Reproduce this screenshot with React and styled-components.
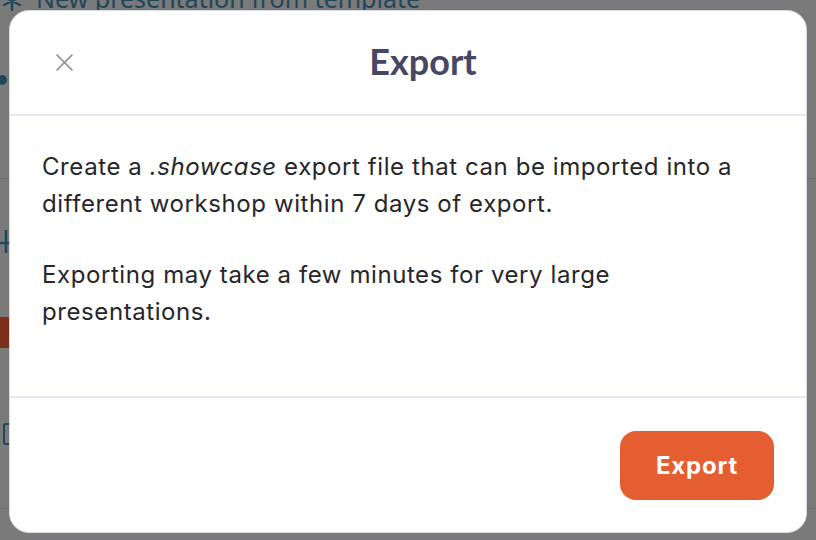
import styled, { createGlobalStyle } from 'styled-components';

const GlobalStyle = createGlobalStyle`
    html, body {
        margin: 0;
        padding: 0;
        width: 816px;
        height: 540px;
        overflow: hidden;
        background: #7a7a7a;
    }
`;

const App = () => {
    return (
        <>
            <GlobalStyle />
            <S.Page>
                <S.Backdrop>
                    <S.TopRow>
                        <svg width='20' height='20' viewBox='0 0 20 20' fill='none' stroke='currentColor' strokeWidth='2.4' strokeLinecap='round'>
                            <path d='M10 1v18M2 6l16 8M18 6L2 14' />
                        </svg>
                        <span>New presentation from template</span>
                    </S.TopRow>
                    <S.Dot />
                    <S.Rule $gap={93} />
                    <S.Plus width='24' height='24' viewBox='0 0 24 24' stroke='currentColor' strokeWidth='2.5'>
                        <path d='M12 0v23M0 13h24' />
                    </S.Plus>
                    <S.Block />
                    <S.Bracket />
                    <S.Rule $gap={63} />
                </S.Backdrop>

                <S.Modal>
                    <S.Header>
                        <S.Close aria-label='Close'>
                            <svg width='17' height='17' viewBox='0 0 17 17' stroke='currentColor' strokeWidth='1.6' strokeLinecap='round'>
                                <path d='M1 1l15 15M16 1L1 16' />
                            </svg>
                        </S.Close>
                        <S.Title>Export</S.Title>
                    </S.Header>
                    <S.Body>
                        <p>
                            Create a <em>.showcase</em> export file that can be imported into a different workshop within 7 days of export.
                        </p>
                        <p>Exporting may take a few minutes for very large presentations.</p>
                    </S.Body>
                    <S.Footer>
                        <S.Button>Export</S.Button>
                    </S.Footer>
                </S.Modal>
            </S.Page>
        </>
    );
};

const S = {};
S.Page = styled.div`
    position: relative;
    width: 816px;
    height: 540px;
    overflow: hidden;
`;

/* faded app content behind the dialog */
S.Backdrop = styled.div`
    display: flex;
    flex-direction: column;
    align-items: flex-start;
    color: #1f475a;
    font-family: 'Noto Sans', sans-serif;
`;

S.TopRow = styled.div`
    display: flex;
    align-items: center;
    gap: 14px;
    margin-top: -17px;
    padding-left: 2px;
    font-size: 25px;
    line-height: 30px;

    svg {
        margin-top: 6px;
    }
`;

S.Dot = styled.div`
    width: 10px;
    height: 10px;
    border-radius: 50%;
    background: #1f475a;
    margin: 62px 0 0 -3px;
`;

S.Rule = styled.div`
    width: 816px;
    height: 1px;
    background: #6e6e6e;
    margin-top: ${(p) => p.$gap}px;
`;

S.Plus = styled.svg`
    margin: 51px 0 0 -6px;
`;

S.Block = styled.div`
    width: 20px;
    height: 31px;
    background: #7a3019;
    margin-top: 63px;
`;

S.Bracket = styled.div`
    box-sizing: border-box;
    width: 14px;
    height: 22px;
    border: 2.5px solid #1f475a;
    border-radius: 3px;
    margin: 75px 0 0 3px;
`;

S.Modal = styled.div`
    position: absolute;
    left: 9px;
    top: 10px;
    width: 798px;
    height: 523px;
    box-sizing: border-box;
    background: #fff;
    border: 1px solid #d9d9e3;
    border-radius: 20px;
    display: flex;
    flex-direction: column;
    overflow: hidden;
    font-family: Inter, 'Noto Sans', sans-serif;
`;

S.Header = styled.div`
    position: relative;
    height: 103px;
    flex-shrink: 0;
    display: flex;
    align-items: center;
    justify-content: center;
    padding-left: 30px;
    border-bottom: 2px solid #e8e8f0;
`;

S.Close = styled.button`
    position: absolute;
    left: 46px;
    top: 43px;
    padding: 0;
    border: 0;
    background: none;
    color: #8a8a8a;
    display: flex;
`;

S.Title = styled.h2`
    margin: 0 0 3px;
    font-family: Lato, sans-serif;
    font-weight: 700;
    font-size: 36px;
    color: #474762;
`;

S.Body = styled.div`
    flex: 1;
    padding: 32px 32px 0 32px;
    border-bottom: 2px solid #e8e8f0;
    color: #26262b;
    font-size: 24px;
    letter-spacing: 0.58px;
    line-height: 37px;

    p {
        margin: 0 0 34px;
    }
`;

S.Footer = styled.div`
    height: 134px;
    flex-shrink: 0;
    display: flex;
    align-items: center;
    justify-content: flex-end;
    padding-right: 32px;
`;

S.Button = styled.button`
    width: 154px;
    height: 69px;
    border: 0;
    border-radius: 16px;
    background: #e55e32;
    color: #fff;
    font-family: Inter, sans-serif;
    font-weight: 700;
    font-size: 24px;
    letter-spacing: 0.8px;
`;

export default App;
